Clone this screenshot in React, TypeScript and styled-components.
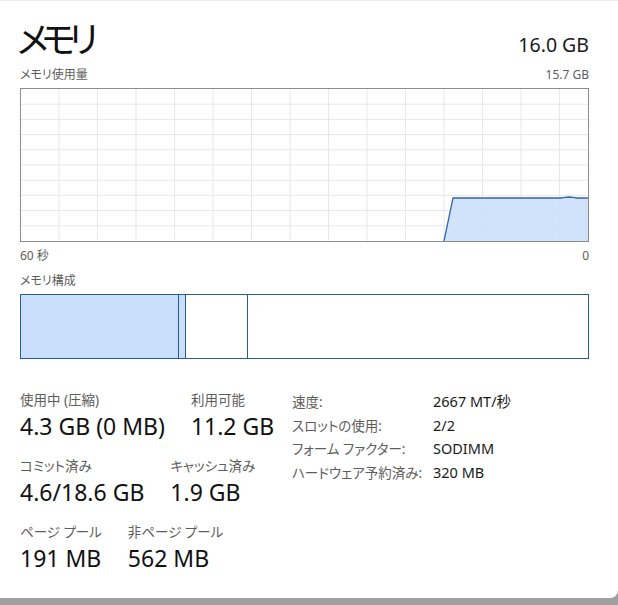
import styled, { createGlobalStyle } from "styled-components";

const GlobalStyle = createGlobalStyle`
  html, body {
    margin: 0;
    padding: 0;
    background: #a9a9a9;
  }
  body {
    font-family: "Noto Sans", "Noto Sans CJK JP", sans-serif;
    font-feature-settings: "palt";
    color: #1a1a1a;
  }
`;

const Frame = styled.div`
  width: 618px;
  height: 605px;
  overflow: hidden;
  background: linear-gradient(#b6b6b6, #a0a0a0);
`;

const Panel = styled.div`
  box-sizing: border-box;
  height: 598px;
  padding: 0 29px 0 20px;
  background: #fff;
  border-top: 1px solid #ececec;
  border-bottom-right-radius: 8px;
`;

const Header = styled.div`
  display: flex;
  justify-content: space-between;
  align-items: flex-end;
  padding-top: 17px;
`;

const Title = styled.h1`
  margin: 0 0 0 -3px;
  font-size: 36px;
  font-weight: 400;
  line-height: 44px;
  letter-spacing: -7px;
  color: #111;
`;

const Capacity = styled.div`
  font-size: 19.5px;
  line-height: 28px;
  margin-bottom: 3px;
`;

const CaptionRow = styled.div<{ $gap?: number }>`
  display: flex;
  justify-content: space-between;
  font-size: 12px;
  line-height: 16px;
  color: #5d5d5d;
  margin-top: ${(p) => p.$gap ?? 0}px;
`;

const ChartBox = styled.div`
  height: 154px;
  margin-top: 5px;
  border: 1px solid #8c8c8c;
  box-sizing: border-box;
`;

const BarBox = styled.div`
  display: flex;
  height: 65px;
  margin-top: 5px;
  border: 1px solid #2b5a98;
  box-sizing: border-box;
`;

const Segment = styled.div<{ $w?: number; $fill?: boolean }>`
  ${(p) => (p.$w ? `width: ${p.$w}px;` : "flex: 1;")}
  background: ${(p) => (p.$fill ? "#c9defa" : "#fff")};
  border-right: ${(p) => (p.$w ? "1px solid #2b5a98" : "none")};
`;

const Stats = styled.div`
  display: flex;
  gap: 18px;
  margin-top: 32px;
`;

const LeftStats = styled.div`
  display: flex;
  flex-direction: column;
  gap: 16px;
  width: 254px;
`;

const StatRow = styled.div`
  display: flex;
  gap: 26px;
`;

const Stat = styled.div`
  display: flex;
  flex-direction: column;
  gap: 2px;
`;

const StatLabel = styled.div`
  font-size: 13.5px;
  line-height: 18px;
  color: #5d5d5d;
  white-space: nowrap;
`;

const StatValue = styled.div`
  font-size: 23px;
  line-height: 30px;
  color: #111;
  white-space: nowrap;
`;

const InfoTable = styled.div`
  display: grid;
  grid-template-columns: 141px auto;
  grid-auto-rows: 23.7px;
  align-items: center;
  align-content: start;
  margin-top: -2px;
`;

const InfoKey = styled.div`
  font-size: 13.5px;
  color: #5d5d5d;
  white-space: nowrap;
`;

const InfoVal = styled.div`
  font-size: 14.5px;
  color: #1a1a1a;
  white-space: nowrap;
`;

const W = 567;
const H = 152;
const vLines = Array.from({ length: 14 }, (_, i) => 38 + i * 38.5);
const hLines = Array.from({ length: 9 }, (_, i) => (i + 1) * 15.2);

const usage = [
  [423, 152],
  [432, 109],
  [540, 109],
  [544, 108.4],
  [548, 108],
  [552, 108.4],
  [556, 109],
  [567, 109],
];

const UsageChart = () => {
  const line = usage.map((p) => p.join(",")).join(" ");
  const area = `${line} ${W},${H}`;
  return (
    <svg width={W} height={H} style={{ display: "block" }}>
      {vLines.map((x) => (
        <line key={`v${x}`} x1={x} x2={x} y1={0} y2={H} stroke="#e7e7e7" />
      ))}
      {hLines.map((y) => (
        <line key={`h${y}`} x1={0} x2={W} y1={y} y2={y} stroke="#e7e7e7" />
      ))}
      <polygon points={area} fill="#c9defa" fillOpacity={0.85} />
      <polyline points={line} fill="none" stroke="#3565ab" strokeWidth={1.3} />
    </svg>
  );
};

const leftStats = [
  [
    ["使用中 (圧縮)", "4.3 GB (0 MB)"],
    ["利用可能", "11.2 GB"],
  ],
  [
    ["コミット済み", "4.6/18.6 GB"],
    ["キャッシュ済み", "1.9 GB"],
  ],
  [
    ["ページ プール", "191 MB"],
    ["非ページ プール", "562 MB"],
  ],
];

const info = [
  ["速度:", "2667 MT/秒"],
  ["スロットの使用:", "2/2"],
  ["フォーム ファクター:", "SODIMM"],
  ["ハードウェア予約済み:", "320 MB"],
];

export default function App() {
  return (
    <Frame>
      <GlobalStyle />
      <Panel>
        <Header>
          <Title>メモリ</Title>
          <Capacity>16.0 GB</Capacity>
        </Header>
        <CaptionRow $gap={5}>
          <span>メモリ使用量</span>
          <span>15.7 GB</span>
        </CaptionRow>
        <ChartBox>
          <UsageChart />
        </ChartBox>
        <CaptionRow $gap={6}>
          <span>60 秒</span>
          <span>0</span>
        </CaptionRow>
        <CaptionRow $gap={9}>
          <span>メモリ構成</span>
        </CaptionRow>
        <BarBox>
          <Segment $w={157} $fill />
          <Segment $w={6} $fill />
          <Segment $w={61} />
          <Segment />
        </BarBox>
        <Stats>
          <LeftStats>
            {leftStats.map((row, i) => (
              <StatRow key={i}>
                {row.map(([label, value]) => (
                  <Stat key={label}>
                    <StatLabel>{label}</StatLabel>
                    <StatValue>{value}</StatValue>
                  </Stat>
                ))}
              </StatRow>
            ))}
          </LeftStats>
          <InfoTable>
            {info.flatMap(([k, v]) => [
              <InfoKey key={k}>{k}</InfoKey>,
              <InfoVal key={k + "v"}>{v}</InfoVal>,
            ])}
          </InfoTable>
        </Stats>
      </Panel>
    </Frame>
  );
}
